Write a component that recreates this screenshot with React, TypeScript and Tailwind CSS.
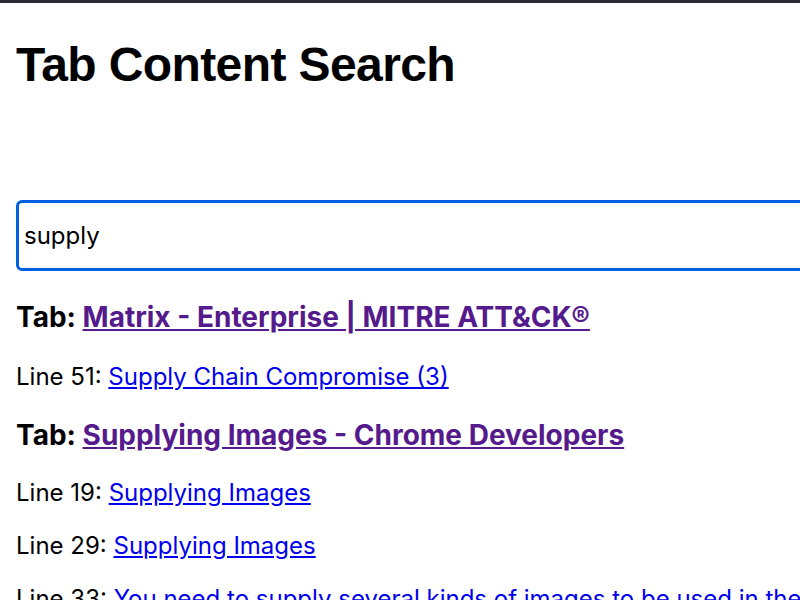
export default function App() {
  const results = [
    {
      tab: "Matrix - Enterprise | MITRE ATT&CK®",
      gap: "mt-[28px]",
      lines: [{ n: 51, text: "Supply Chain Compromise (3)" }],
    },
    {
      tab: "Supplying Images - Chrome Developers",
      gap: "mt-[26px]",
      lines: [
        { n: 19, text: "Supplying Images" },
        { n: 29, text: "Supplying Images" },
        { n: 33, text: "You need to supply several kinds of images to be used in the Chrome Web Store listing." },
      ],
    },
  ];

  return (
    <div className="h-[600px] w-[800px] overflow-hidden bg-white text-black font-['Inter',sans-serif]">
      <div className="h-[3px] bg-[#2b2a33]" />
      <div className="px-4">
        <h1 className="mt-[34px] text-[48px] leading-[56px] font-bold tracking-[-0.6px] font-['Liberation_Sans',Arial,sans-serif]">
          Tab Content Search
        </h1>

        <input
          type="text"
          defaultValue="supply"
          className="mt-[107px] block h-[71px] w-[900px] rounded-[6px] border-[3px] border-[#0060df] px-[5px] text-[24px] outline-none"
        />

        <div className="mt-[30px]">
          {results.map((r, i) => (
            <div key={i} className={i > 0 ? "mt-[26px]" : ""}>
              <h3 className="text-[28px] leading-[32px] font-bold whitespace-nowrap">
                Tab:{" "}
                <a href="#" className="text-[#551a8b] underline">
                  {r.tab}
                </a>
              </h3>
              <div className={`${r.gap} flex flex-col gap-[21px]`}>
                {r.lines.map((l) => (
                  <p key={l.n} className="text-[24px] leading-[32px] whitespace-nowrap">
                    Line {l.n}:{" "}
                    <a href="#" className="text-[#0000ee] underline">
                      {l.text}
                    </a>
                  </p>
                ))}
              </div>
            </div>
          ))}
        </div>
      </div>
    </div>
  );
}
